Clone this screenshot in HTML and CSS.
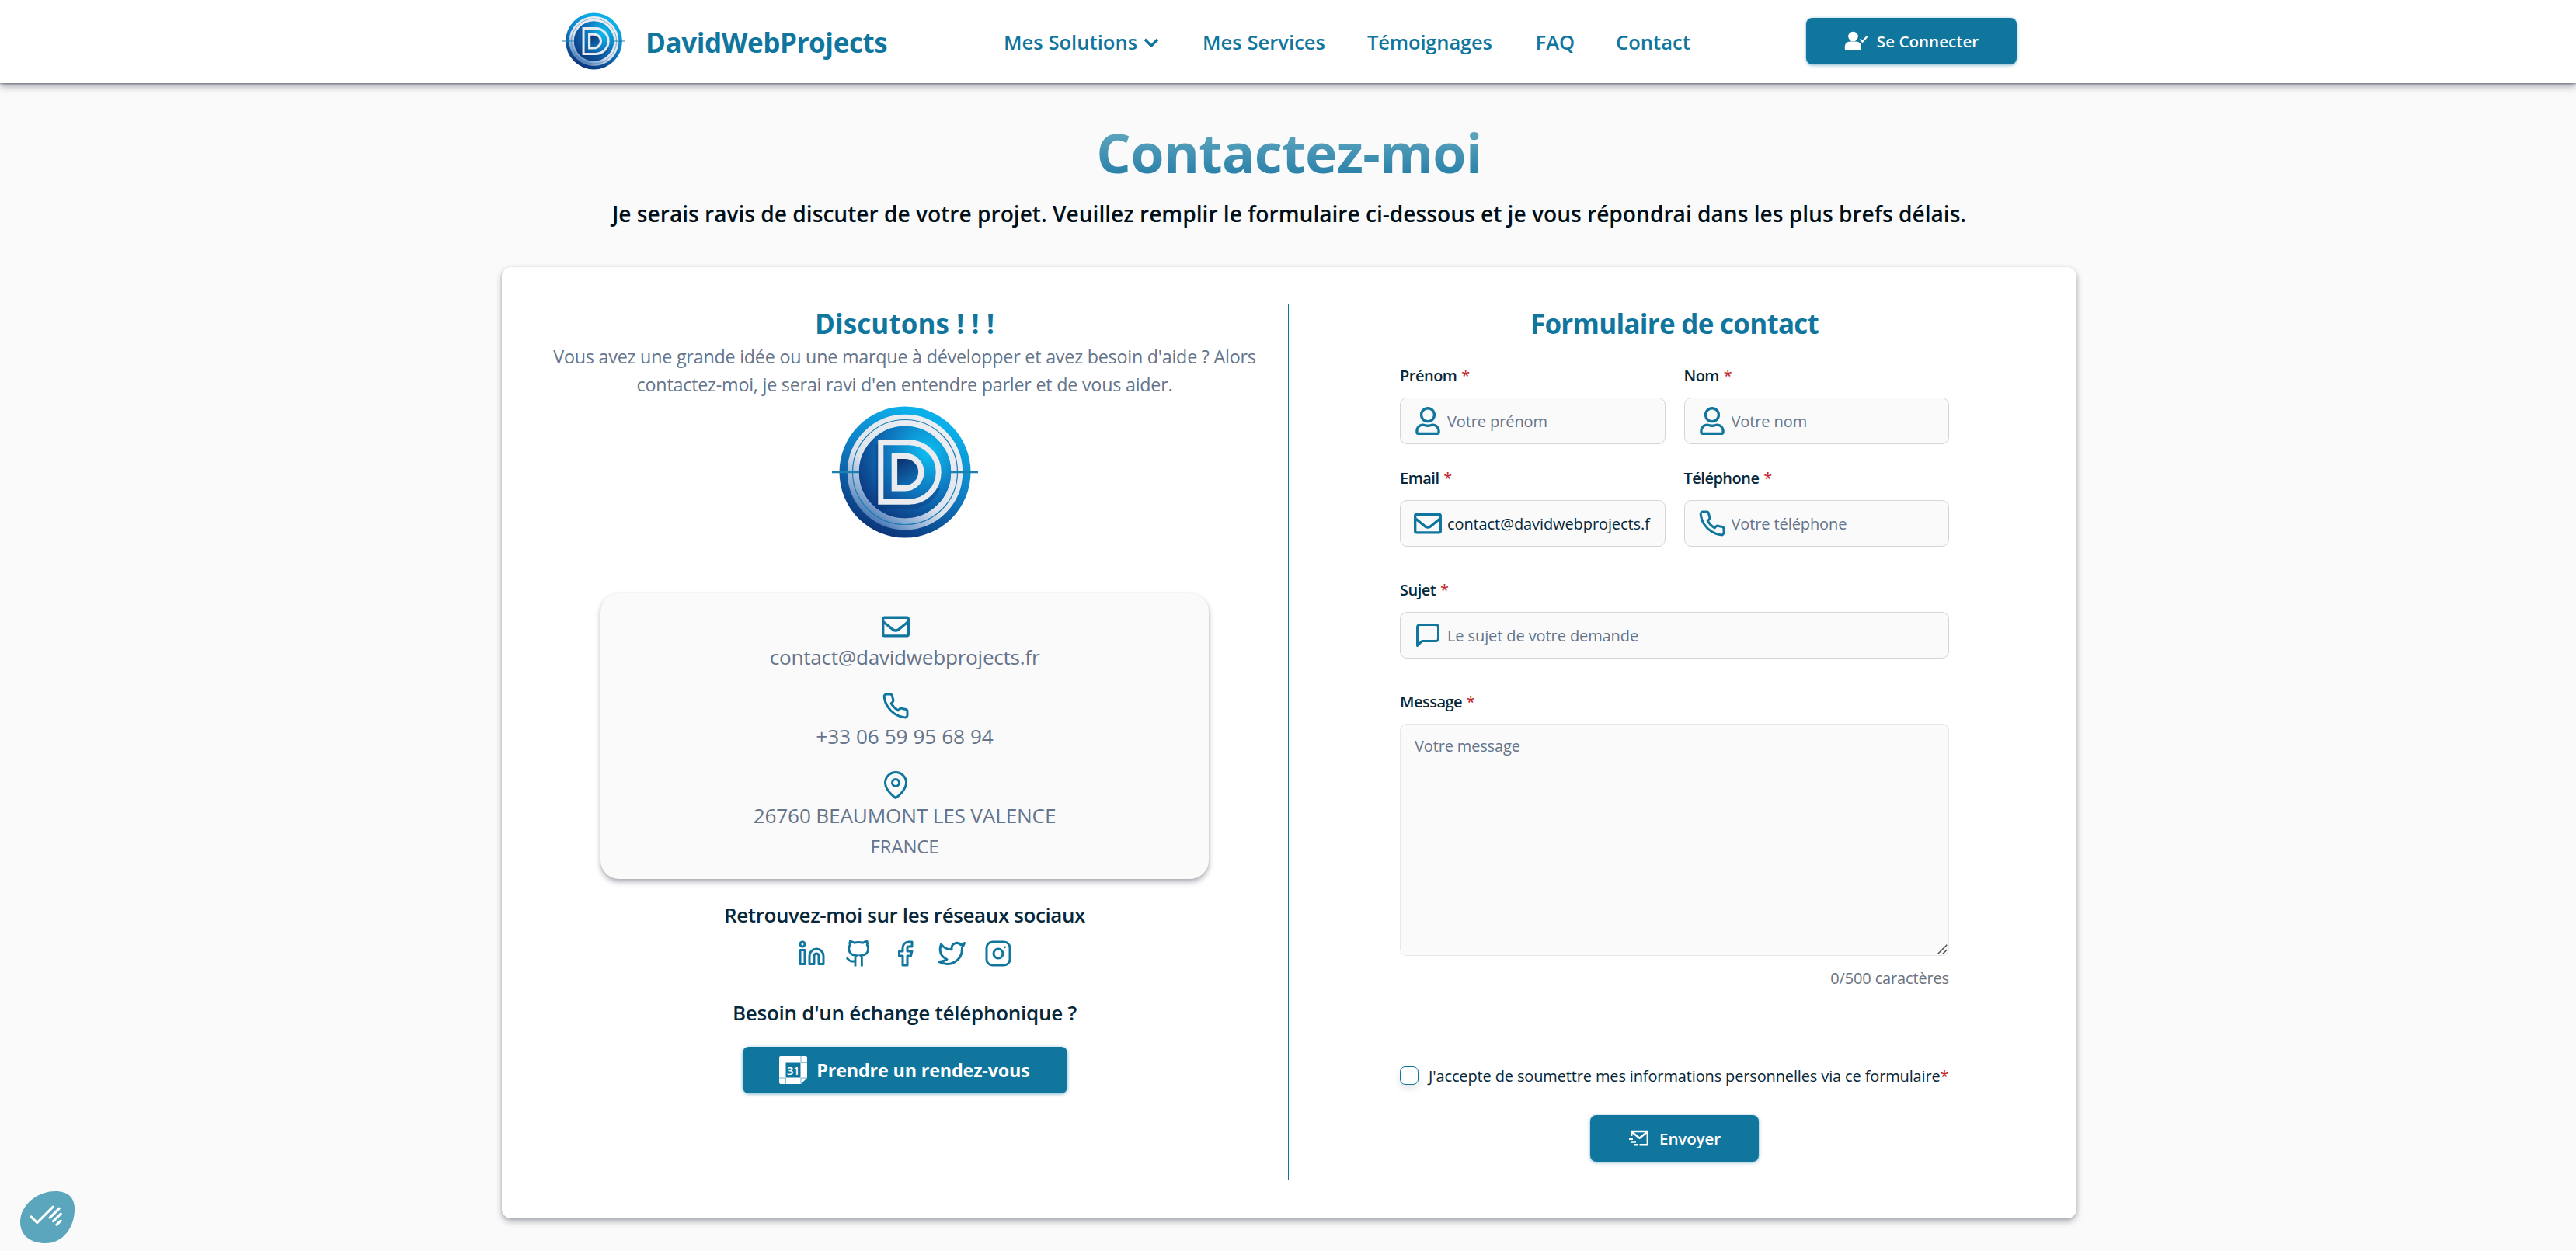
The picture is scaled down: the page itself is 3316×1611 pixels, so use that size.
FILE: index.html
```html
<!DOCTYPE html>
<html lang="fr">
<head>
<meta charset="utf-8">
<title>Contact - DavidWebProjects</title>
<link rel="stylesheet" href="styles.css">
</head>
<body>
<svg class="sprite" aria-hidden="true">
  <defs>
    <linearGradient id="disc" x1="0.7" y1="0.1" x2="0.3" y2="1">
      <stop offset="0" stop-color="#0bb0ea"/><stop offset="0.45" stop-color="#0f7cc2"/><stop offset="1" stop-color="#0b2f74"/>
    </linearGradient>
    <radialGradient id="core" cx="0.75" cy="0.28" r="0.85">
      <stop offset="0" stop-color="#0cc0f2"/><stop offset="0.5" stop-color="#0f79c0"/><stop offset="1" stop-color="#0d377f"/>
    </radialGradient>
    <linearGradient id="ring" gradientUnits="userSpaceOnUse" x1="40" y1="-60" x2="-45" y2="62">
      <stop offset="0" stop-color="#eceef2"/><stop offset="0.6" stop-color="#dde3ed"/><stop offset="0.85" stop-color="#86a8d0"/><stop offset="1" stop-color="#4474b2"/>
    </linearGradient>
    <linearGradient id="pit" x1="0.1" y1="0" x2="0.6" y2="1">
      <stop offset="0" stop-color="#0b2a66"/><stop offset="1" stop-color="#1173bb"/>
    </linearGradient>
    <symbol id="logo" viewBox="-94 -88 188 176">
      <circle r="84.5" fill="url(#disc)"/>
      <circle r="66.7" fill="none" stroke="url(#ring)" stroke-width="15"/>
      <circle r="67.5" fill="none" stroke="#1b7bb5" stroke-width="1.2"/>
      <circle r="59.2" fill="url(#core)"/>
      <path d="M-94 0H-59M59 0H94" stroke="#1a80ad" stroke-width="2.4"/>
      <path d="M-34-36V44H6a40 40 0 0 0 36-24" fill="none" stroke="#0a3474" stroke-opacity=".35" stroke-width="7"/>
      <path d="M-31.2-38.2H5A38.2 38.2 0 0 1 5 38.2H-31.2Z" fill="none" stroke="#e9ebef" stroke-width="7"/>
      <path d="M-13.6-20.8H0A20.8 20.8 0 0 1 0 20.8H-13.6Z" fill="url(#pit)" stroke="#e9ebef" stroke-width="7.4"/>
    </symbol>
    <symbol id="user" viewBox="0 0 448 512"><path fill="currentColor" d="M313.6 304c-28.7 0-42.5 16-89.6 16-47.1 0-60.8-16-89.6-16C60.2 304 0 364.2 0 438.4V464c0 26.5 21.5 48 48 48h352c26.5 0 48-21.5 48-48v-25.6c0-74.2-60.2-134.4-134.4-134.4zM400 464H48v-25.6c0-47.6 38.8-86.4 86.4-86.4 14.6 0 38.3 16 89.6 16 51.7 0 74.9-16 89.6-16 47.6 0 86.4 38.8 86.4 86.4V464zM224 288c79.5 0 144-64.5 144-144S303.5 0 224 0 80 64.5 80 144s64.5 144 144 144zm0-240c52.9 0 96 43.1 96 96s-43.1 96-96 96-96-43.1-96-96 43.1-96 96-96z"/></symbol>
    <symbol id="mail" viewBox="0 0 512 512"><path fill="currentColor" d="M464 64H48C21.49 64 0 85.49 0 112v288c0 26.51 21.49 48 48 48h416c26.51 0 48-21.49 48-48V112c0-26.51-21.49-48-48-48zm0 48v40.805c-22.422 18.259-58.168 46.651-134.587 106.49-16.841 13.247-50.201 45.072-73.413 44.701-23.208.375-56.579-31.459-73.413-44.701C106.18 199.465 70.425 171.067 48 152.805V112h416zM48 400V214.398c22.914 18.251 55.409 43.862 104.938 82.646 21.857 17.205 60.134 55.186 103.062 54.955 42.717.231 80.509-37.199 103.053-54.947 49.528-38.783 82.032-64.401 104.947-82.653V400H48z"/></symbol>
    <symbol id="phone" viewBox="0 0 24 24"><path class="line" d="M22 16.92v3a2 2 0 0 1-2.18 2 19.79 19.79 0 0 1-8.63-3.07 19.5 19.5 0 0 1-6-6 19.79 19.79 0 0 1-3.07-8.67A2 2 0 0 1 4.11 2h3a2 2 0 0 1 2 1.72 12.84 12.84 0 0 0 .7 2.81 2 2 0 0 1-.45 2.11L8.09 9.91a16 16 0 0 0 6 6l1.27-1.27a2 2 0 0 1 2.11-.45 12.84 12.84 0 0 0 2.81.7A2 2 0 0 1 22 16.92z"/></symbol>
    <symbol id="pin" viewBox="0 0 24 24"><path class="line" d="M21 10c0 7-9 13-9 13s-9-6-9-13a9 9 0 0 1 18 0z"/><circle class="line" cx="12" cy="10" r="3"/></symbol>
    <symbol id="chat" viewBox="0 0 24 24"><path class="line" d="M21 15a2 2 0 0 1-2 2H7l-4 4V5a2 2 0 0 1 2-2h14a2 2 0 0 1 2 2z"/></symbol>
  </defs>
</svg>

<header class="header">
  <div class="header-inner">
    <a class="brand"><svg class="brand-logo"><use href="#logo"/></svg><span>DavidWebProjects</span></a>
    <nav class="nav">
      <a>Mes Solutions <svg class="chevron" viewBox="0 0 20 12"><path d="M1.8 1.8 10 10l8.2-8.2" fill="none" stroke="currentColor" stroke-width="3.4"/></svg></a>
      <a>Mes Services</a>
      <a class="tight">Témoignages</a>
      <a>FAQ</a>
      <a>Contact</a>
    </nav>
    <a class="btn btn-login">
      <svg width="31" height="26" viewBox="0 0 31 26"><circle cx="11.5" cy="7" r="6.3" fill="#fff"/><path d="M.8 23v-3.2a6.4 6.4 0 0 1 6.4-6.4h8.4a6.4 6.4 0 0 1 6.4 6.4V23a2 2 0 0 1-2 2H2.800a2 2 0 0 1-2-2z" fill="#fff"/><path d="m20.500 10.500 3 3 6-6.500" fill="none" stroke="#fff" stroke-width="2.400"/></svg>
      Se Connecter
    </a>
  </div>
</header>

<main class="main">
  <h1>Contactez-moi</h1>
  <p class="subtitle">Je serais ravis de discuter de votre projet. Veuillez remplir le formulaire ci-dessous et je vous répondrai dans les plus brefs délais.</p>

  <div class="card">
    <section class="talk">
      <h2 class="talk-title">Discutons ! ! !</h2>
      <p class="intro">Vous avez une grande idée ou une marque à développer et avez besoin d'aide ? Alors<br>contactez-moi, je serai ravi d'en entendre parler et de vous aider.</p>
      <svg class="talk-logo"><use href="#logo"/></svg>
      <div class="info">
        <div class="info-item"><svg class="icon"><use href="#mail"/></svg><span class="info-mail">contact@davidwebprojects.fr</span></div>
        <div class="info-item"><svg class="icon"><use href="#phone"/></svg><span class="info-phone">+33 06 59 95 68 94</span></div>
        <div class="info-item"><svg class="icon"><use href="#pin"/></svg><span>26760 BEAUMONT LES VALENCE</span><small>FRANCE</small></div>
      </div>
      <h3 class="social-title">Retrouvez-moi sur les réseaux sociaux</h3>
      <div class="social">
        <svg class="icon" viewBox="0 0 24 24"><path class="line" d="M16 8a6 6 0 0 1 6 6v7h-4v-7a2 2 0 0 0-4 0v7h-4v-7a6 6 0 0 1 6-6z"/><path class="line" d="M2 9h4v12H2z"/><circle class="line" cx="4" cy="4" r="2"/></svg>
        <svg class="icon" viewBox="0 0 36 36"><path d="M2.500 24c2.500 0 3 4 7 4H14M14 34.500V24c0-1.600.6-2.600 1.500-3.300-6-.4-9.700-3.600-9.700-9.200 0-1.900.6-3.400 1.400-4.600-.6-1.600-.5-3.200.1-4.700 2 .1 3.600.8 5.200 2 3.700-.9 7.700-.9 11.400 0 1.600-1.200 3.200-1.900 5.200-2 .6 1.500.7 3.100.1 4.700.8 1.200 1.400 2.700 1.400 4.600 0 5.600-3.700 8.800-9.700 9.200.9.700 1.500 1.700 1.500 3.300v10.500" fill="none" stroke="currentColor" stroke-width="2.800"/></svg>
        <svg class="icon" viewBox="0 0 24 24"><path class="line" d="M18 2h-3a5 5 0 0 0-5 5v3H7v4h3v8h4v-8h3l1-4h-4V7a1 1 0 0 1 1-1h3z"/></svg>
        <svg class="icon" viewBox="0 0 24 24"><path class="line" d="M23 3a10.900 10.900 0 0 1-3.140 1.530 4.480 4.480 0 0 0-7.860 3v1A10.660 10.660 0 0 1 3 4s-4 9 5 13a11.640 11.640 0 0 1-7 2c9 5 20 0 20-11.500a4.500 4.500 0 0 0-.08-.83A7.720 7.720 0 0 0 23 3z"/></svg>
        <svg class="icon" viewBox="0 0 24 24"><rect class="line" x="2" y="2" width="20" height="20" rx="5"/><circle class="line" cx="12" cy="12" r="4"/><path class="line" d="M17.500 6.500h.01"/></svg>
      </div>
      <h3 class="call-title">Besoin d'un échange téléphonique ?</h3>
      <a class="btn btn-meet">
        <svg width="36" height="36" viewBox="0 0 36 36"><path d="M2 0h32a2 2 0 0 1 2 2v26l-8 8H2a2 2 0 0 1-2-2V2a2 2 0 0 1 2-2z" fill="#fff"/><path d="M8.500 8.500h19v19h-19z" fill="#10769e"/><path d="M28 0v8.300h8M0 28h8.300v8M28 36v-8h8" fill="none" stroke="#6fb0c9" stroke-width="1"/><text x="18" y="23.600" text-anchor="middle" class="cal-day">31</text></svg>
        Prendre un rendez-vous
      </a>
    </section>

    <div class="divider"></div>

    <section class="form-side">
      <h2 class="form-title">Formulaire de contact</h2>
      <form class="form">
        <div class="row">
          <div class="field"><label>Prénom <i>*</i></label><div class="control"><svg class="icon"><use href="#user"/></svg><input type="text" placeholder="Votre prénom"></div></div>
          <div class="field"><label>Nom <i>*</i></label><div class="control"><svg class="icon"><use href="#user"/></svg><input type="text" placeholder="Votre nom"></div></div>
          <div class="field"><label>Email <i>*</i></label><div class="control"><svg class="icon"><use href="#mail"/></svg><input type="text" value="contact@davidwebprojects.fr"></div></div>
          <div class="field"><label>Téléphone <i>*</i></label><div class="control"><svg class="icon"><use href="#phone"/></svg><input type="text" placeholder="Votre téléphone"></div></div>
        </div>
        <div class="field"><label>Sujet <i>*</i></label><div class="control"><svg class="icon"><use href="#chat"/></svg><input type="text" placeholder="Le sujet de votre demande"></div></div>
        <div class="field">
          <label>Message <i>*</i></label>
          <div class="area">
            <textarea placeholder="Votre message"></textarea>
            <svg class="grip" width="13" height="13" viewBox="0 0 13 13"><path d="M.7 12.300 12.300.7M7 12.300l5.300-5.300" stroke="#4b4f54" stroke-width="1.500"/></svg>
          </div>
          <div class="counter">0/500 caractères</div>
        </div>
        <label class="consent"><span class="box"></span><span>J'accepte de soumettre mes informations personnelles via ce formulaire<i>*</i></span></label>
        <a class="btn btn-send">
          <svg width="28" height="22" viewBox="0 0 28 22"><path d="M4.200 8V2h20.600v17.300H14.500M4.500 2.500l10 8.200 10-8.200M1 11.700h5M3 15.500h7M7 19.300h5" fill="none" stroke="#fff" stroke-width="2.400" stroke-linejoin="round"/></svg>
          Envoyer
        </a>
      </form>
    </section>
  </div>
</main>

<button class="cookies" aria-label="Cookies">
  <svg width="70" height="67" viewBox="79 103 209 200"><path d="M215 103C265 103 288 130 288 172 288 240 245 303 175 303 120 303 79 275 79 220 79 160 140 103 215 103Z" fill="#5ba6bd"/><path d="M121 201l23 23 61-61M193 205l36-36M206 218l29-28M219 232l16-15" fill="none" stroke="#fff" stroke-width="9.500" stroke-linecap="round"/></svg>
</button>
</body>
</html>
```

FILE: styles.css
```css
* { box-sizing: border-box; margin: 0; padding: 0; }

:root {
  --primary: #10769e;
  --ink: #06283a;
  --muted: #64748b;
  --surface: #fafafa;
}

body {
  min-height: 1611px;
  background: var(--surface);
  color: var(--ink);
  font-family: "Open Sans", "Noto Sans", sans-serif;
  font-size: 20px;
  letter-spacing: -0.15px;
}

.sprite { position: absolute; width: 0; height: 0; }
.line { fill: none; stroke: currentColor; stroke-width: 2; stroke-linecap: round; stroke-linejoin: round; }
.icon { display: block; width: 36px; height: 36px; color: var(--primary); }

/* Header */
.header { height: 107px; background: #fff; box-shadow: 0 3px 10px rgba(0, 10, 30, .42), 0 1px 3px rgba(0, 10, 30, .4); }
.header-inner { display: flex; align-items: center; width: 1876px; height: 100%; margin: 0 auto; padding-left: 5px; }
.brand { display: flex; align-items: center; gap: 26px; width: 567px; padding-top: 1px; color: var(--primary); font-size: 35px; font-weight: 700; letter-spacing: -.42px; }
.brand-logo { width: 81px; height: 76px; margin: -2px 0 0 -1px; }
.nav { display: grid; grid-template-columns: 256px 212px 216.500px 103.500px auto; padding-top: 1px; color: var(--primary); font-size: 25.500px; font-weight: 600; letter-spacing: .05px; }
.nav a { white-space: nowrap; }
.nav .tight { letter-spacing: -.15px; }
.chevron { width: 20px; height: 12px; margin: 0 0 3px 1px; }

/* Buttons */
.btn { display: flex; align-items: center; justify-content: center; height: 60px; border-radius: 8px; background: var(--primary); color: #fff; white-space: nowrap; box-shadow: 0 1px 4px rgba(16, 118, 158, .55); }
.btn-login { width: 271px; margin: 0 0 1px auto; gap: 11px; font-size: 20.500px; font-weight: 600; letter-spacing: .05px; }
.btn-meet { width: 418px; margin-top: 24px; gap: 12px; font-size: 23.300px; font-weight: 700; letter-spacing: -.15px; }
.btn-send { width: 217px; margin: 36px auto 0; gap: 12px; font-weight: 600; font-size: 20.500px; letter-spacing: -.1px; }
.cal-day { font: 600 15px "Open Sans", sans-serif; fill: #fff; letter-spacing: -.5px; }

/* Heading */
.main { display: flex; flex-direction: column; align-items: center; padding: 39px 0 42px 3px; }
h1 { padding: 0 10px; background: linear-gradient(#7fb9ca 0%, #5aa3bd 28%, #2b81a9 78%, #10769e 100%); background-clip: text; -webkit-background-clip: text; color: transparent; font-size: 70px; line-height: 100px; letter-spacing: -.6px; }
.subtitle { margin-top: 9px; color: #010f18; font-size: 28.200px; line-height: 40px; font-weight: 600; letter-spacing: -.03px; white-space: nowrap; }

/* Card */
.card { display: flex; width: 2027px; height: 1225px; margin-top: 49px; padding: 48px 23px 48px 24px; border-radius: 12px; background: #fff; box-shadow: 0 4px 8px rgba(0, 10, 30, .3), 0 1px 4px rgba(0, 10, 30, .1); }
.divider { width: 1px; height: 1127px; background: var(--primary); }
.talk, .form-side { display: flex; flex-direction: column; align-items: center; }
.talk { flex: 0 0 988px; padding-left: 1px; }
.form-side { flex: 1; padding-left: 2px; }
h2 { color: var(--primary); font-size: 35px; line-height: 50px; margin-bottom: -1px; }
.talk-title { letter-spacing: .1px; }
.form-title { letter-spacing: -.73px; }
.intro { color: var(--muted); font-size: 23.300px; line-height: 36px; letter-spacing: -.22px; text-align: center; white-space: nowrap; }
.talk-logo { width: 188px; height: 176px; margin-top: 7px; }
.info { display: flex; flex-direction: column; gap: 24px; width: 783px; height: 368px; margin-top: 68px; padding-top: 25px; border-radius: 24px; background: var(--surface); box-shadow: 0 4px 7px rgba(0, 10, 30, .3), 0 1px 3px rgba(0, 10, 30, .08); }
.info-item { display: flex; flex-direction: column; align-items: center; color: var(--muted); font-size: 26.200px; line-height: 42px; letter-spacing: -.18px; }
.info-item .icon { margin-right: 24px; }
.info-mail { letter-spacing: -.29px; }
.info-phone { letter-spacing: 0; }
.info-item small { font-size: 24px; line-height: 38px; }
h3 { font-size: 26px; line-height: 40px; font-weight: 600; letter-spacing: -.4px; }
.social-title { margin-top: 26px; }
.social { display: flex; gap: 24px; margin-top: 12px; }
.call-title { margin-top: 38px; letter-spacing: -.25px; }

/* Form */
.form { width: 707px; margin-top: 28px; }
.row { display: grid; grid-template-columns: 1fr 1fr; gap: 29px 24px; }
.form > .field { margin-top: 41px; }
.field label { display: block; line-height: 30px; font-weight: 600; letter-spacing: -.5px; }
i { color: #c2262b; font-style: normal; font-weight: 400; }
.field i { margin-left: 1px; }
.control { display: flex; align-items: center; gap: 7px; height: 60px; margin-top: 13px; padding: 0 18px 0 17px; border: 1px solid #d3d5d8; border-radius: 9px; background: var(--surface); }
.control .icon { flex: none; }
input { flex: 1; min-width: 0; padding-top: 2px; border: 0; outline: 0; background: none; color: var(--ink); font: 400 20px/30px "Open Sans", "Noto Sans", sans-serif; letter-spacing: -.1px; }
.area { position: relative; margin-top: 13px; }
textarea { display: block; width: 100%; height: 299px; padding: 13px 18px; border: 1px solid #e5e7eb; border-radius: 9px; background: var(--surface); font: 400 20px/30px "Open Sans", "Noto Sans", sans-serif; letter-spacing: -.15px; resize: none; }
.grip { position: absolute; right: 2px; bottom: 2px; }
::placeholder { color: var(--muted); opacity: 1; }
.counter { margin-top: 14px; color: #6b7280; line-height: 30px; text-align: right; }
.consent { display: flex; align-items: center; gap: 13px; height: 30px; margin-top: 95px; letter-spacing: -.14px; white-space: nowrap; }
.box { flex: none; width: 24px; height: 24px; border: 1px solid var(--primary); border-radius: 7px; background: #fff; box-shadow: 0 5px 8px rgba(0, 0, 0, .1); }

/* Consent widget */
.cookies { position: fixed; left: 26px; bottom: 10px; width: 70px; height: 67px; border: 0; background: none; }
```
